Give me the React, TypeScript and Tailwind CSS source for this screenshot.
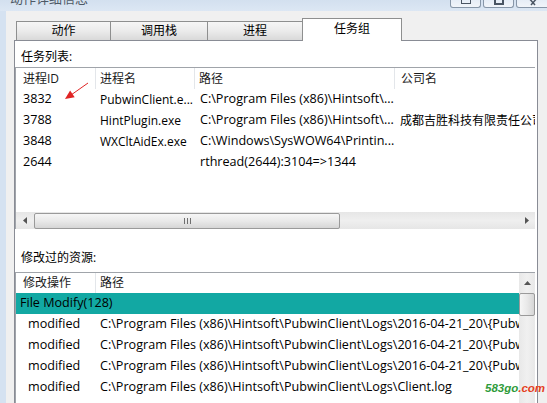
import React from "react";

const rows1 = [
  { id: "3832", name: "PubwinClient.e...", path: "C:\\Program Files (x86)\\Hintsoft\\...", co: "" },
  { id: "3788", name: "HintPlugin.exe", path: "C:\\Program Files (x86)\\Hintsoft\\...", co: "成都吉胜科技有限责任公司" },
  { id: "3848", name: "WXCltAidEx.exe", path: "C:\\Windows\\SysWOW64\\Printin...", co: "" },
  { id: "2644", name: "", path: "rthread(2644):3104=>1344", co: "" },
];

const rows2 = [
  "C:\\Program Files (x86)\\Hintsoft\\PubwinClient\\Logs\\2016-04-21_20\\{PubwinClient}.log",
  "C:\\Program Files (x86)\\Hintsoft\\PubwinClient\\Logs\\2016-04-21_20\\{PubwinClient}.log",
  "C:\\Program Files (x86)\\Hintsoft\\PubwinClient\\Logs\\2016-04-21_20\\{PubwinClient}.log",
  "C:\\Program Files (x86)\\Hintsoft\\PubwinClient\\Logs\\Client.log",
];

function Tab({ label, w, first, selected }: { label: string; w: string; first?: boolean; selected?: boolean }) {
  if (selected) {
    return (
      <div className={`${w} h-[23px] -mb-px -ml-px bg-white border border-b-0 border-[#8e8f8f] flex justify-center pt-[2px] leading-[16px] relative z-10`}>
        {label}
      </div>
    );
  }
  return (
    <div
      className={`${w} h-[19px] ${first ? "" : "-ml-px"} border border-b-0 border-[#8e8f8f] bg-gradient-to-b from-[#f6f6f6] via-[#ebebeb] to-[#d9d9d9] flex items-center justify-center leading-[16px]`}
    >
      {label}
    </div>
  );
}

export default function App() {
  return (
    <div className="w-[547px] h-[403px] overflow-hidden bg-[#f0f0f0] flex flex-col relative font-['Open_Sans','Noto_Sans_CJK_SC',sans-serif] text-[12px] text-black">
      {/* title bar */}
      <div className="h-[11px] shrink-0 bg-gradient-to-b from-[#d3e0ef] to-[#dce7f4] flex items-start">
        <div className="pl-[10px] -mt-[9px] text-[13px] leading-[14px] text-[#4e5966] font-['Noto_Sans_CJK_SC',sans-serif]">
          动作详细信息
        </div>
        <div className="ml-auto flex gap-[2px] -mr-[3px]">
          <div className="w-[31px] h-[8px] rounded-b-[3px] border border-t-0 border-[#8796a8] bg-gradient-to-b from-[#e6edf6] to-[#f1f5fa] flex justify-center">
            <div className="w-[10px] h-[4px] border border-t-0 border-[#4a5563]" />
          </div>
          <div className="w-[31px] h-[8px] rounded-b-[3px] border border-t-0 border-[#8796a8] bg-gradient-to-b from-[#e6edf6] to-[#f1f5fa] flex justify-center">
            <div className="w-[10px] h-[5px] border-2 border-t-0 border-[#4a5563]" />
          </div>
          <div className="w-[34px] h-[8px] rounded-b-[3px] border border-t-0 border-[#8796a8] bg-gradient-to-b from-[#e6edf6] to-[#f1f5fa] flex justify-center">
            <svg width="12" height="6" viewBox="0 0 12 6">
              <path d="M1 -3 L8 5 M11 -3 L4 5" stroke="#4a5563" strokeWidth="1.5" fill="none" />
            </svg>
          </div>
        </div>
      </div>

      <div className="flex flex-1 min-h-0">
        <div className="w-[6px] shrink-0 bg-[#d5e2f1]" />
        <div className="flex-1 flex flex-col pl-[8px] pt-[7px] min-h-0">
          {/* tabs */}
          <div className="h-[22px] flex items-end pl-[2px] shrink-0 relative z-10">
            <Tab label="动作" w="w-[95px]" first />
            <Tab label="调用栈" w="w-[98px]" />
            <Tab label="进程" w="w-[96px]" />
            <Tab label="任务组" w="w-[100px]" selected />
          </div>

          {/* panel */}
          <div className="w-[524px] flex-1 border border-b-0 border-[#898c95] bg-white flex flex-col min-h-0">
            <div className="pl-[6px] pt-[8px] leading-[16px]">任务列表:</div>

            {/* list 1 */}
            <div className="mt-[2px] w-[520px] h-[162px] border-t border-l border-[#a0a4aa] flex flex-col shrink-0">
              <div className="h-[21px] grid grid-cols-[80px_99px_200px_1fr] items-stretch text-[#1a1a1a]">
                <div className="pl-[7px] flex items-center border-r border-[#e3e6ea]">进程ID</div>
                <div className="pl-[4px] flex items-center border-r border-[#e3e6ea]">进程名</div>
                <div className="pl-[4px] flex items-center border-r border-[#e3e6ea]">路径</div>
                <div className="pl-[6px] flex items-center">公司名</div>
              </div>
              {rows1.map((r) => (
                <div key={r.id} className="h-[21px] grid grid-cols-[80px_99px_200px_1fr] items-center whitespace-nowrap text-[12.6px]">
                  <div className="pl-[7px] overflow-hidden">{r.id}</div>
                  <div className="pl-[4px] overflow-hidden text-[12px]">{r.name}</div>
                  <div className="pl-[5px] overflow-hidden">{r.path}</div>
                  <div className="pl-[5px] overflow-hidden text-[12px]">{r.co}</div>
                </div>
              ))}
              <div className="flex-1" />
              {/* horizontal scrollbar */}
              <div className="h-[17px] bg-gradient-to-b from-[#e6e6e6] via-[#efefef] to-[#e6e6e6] flex items-center">
                <div className="w-[18px] h-full flex items-center justify-center">
                  <svg width="5" height="7" viewBox="0 0 5 7"><path d="M4 0 L0 3.5 L4 7 Z" fill="#555" /></svg>
                </div>
                <div className="w-[306px] h-[16px] rounded-[2px] border border-[#9a9a9a] bg-gradient-to-b from-[#f6f6f6] via-[#e9e9e9] to-[#d6d6d6] flex items-center justify-center gap-[2px]">
                  <div className="w-px h-[6px] bg-[#6f6f6f]" />
                  <div className="w-px h-[6px] bg-[#6f6f6f]" />
                  <div className="w-px h-[6px] bg-[#6f6f6f]" />
                </div>
                <div className="flex-1" />
                <div className="w-[17px] h-full flex items-center justify-center">
                  <svg width="5" height="7" viewBox="0 0 5 7"><path d="M1 0 L5 3.5 L1 7 Z" fill="#555" /></svg>
                </div>
              </div>
            </div>

            <div className="pl-[6px] mt-[21px] leading-[16px]">修改过的资源:</div>

            {/* list 2 */}
            <div className="mt-[6px] w-[520px] flex-1 border-t border-l border-[#a0a4aa] flex min-h-0">
              <div className="flex-1 flex flex-col min-w-0">
                <div className="h-[20px] grid grid-cols-[80px_1fr] text-[#1a1a1a]">
                  <div className="pl-[7px] flex items-center border-r border-[#e3e6ea]">修改操作</div>
                  <div className="pl-[4px] flex items-center">路径</div>
                </div>
                <div className="h-[21px] bg-[#12a8a3] pl-[4px] flex items-center whitespace-nowrap text-[12.6px]">File Modify(128)</div>
                {rows2.map((p, i) => (
                  <div key={i} className="h-[21px] grid grid-cols-[80px_1fr] items-center whitespace-nowrap text-[12.6px]">
                    <div className="pl-[12px]">modified</div>
                    <div className="pl-[4px] overflow-hidden">{p}</div>
                  </div>
                ))}
              </div>
              <div className="w-[16px] shrink-0 bg-gradient-to-r from-[#e8e8e8] via-[#f0f0f0] to-[#e8e8e8] flex flex-col">
                <div className="h-[20px] flex items-center justify-center">
                  <svg width="7" height="5" viewBox="0 0 7 5"><path d="M0 4 L3.5 0 L7 4 Z" fill="#555" /></svg>
                </div>
                <div className="h-[23px] rounded-[2px] border border-[#9a9a9a] bg-gradient-to-r from-[#f6f6f6] via-[#e9e9e9] to-[#d6d6d6]" />
              </div>
            </div>
          </div>
        </div>
      </div>

      {/* red arrow annotation */}
      <svg className="absolute left-[60px] top-[78px]" width="34" height="26" viewBox="0 0 34 26">
        <line x1="28" y1="5" x2="11" y2="17" stroke="#e02424" strokeWidth="1" />
        <polygon points="5,21 14.7,19.2 10.1,12.6" fill="#e02424" />
      </svg>

      {/* watermark */}
      <div className="absolute left-[485px] top-[380px] text-[11.5px] leading-[16px] font-bold italic font-['Liberation_Sans',sans-serif] whitespace-nowrap">
        <span className="text-[#2e9b3a]">583go</span>
        <span className="text-[#e5401e]">.com</span>
      </div>
    </div>
  );
}
